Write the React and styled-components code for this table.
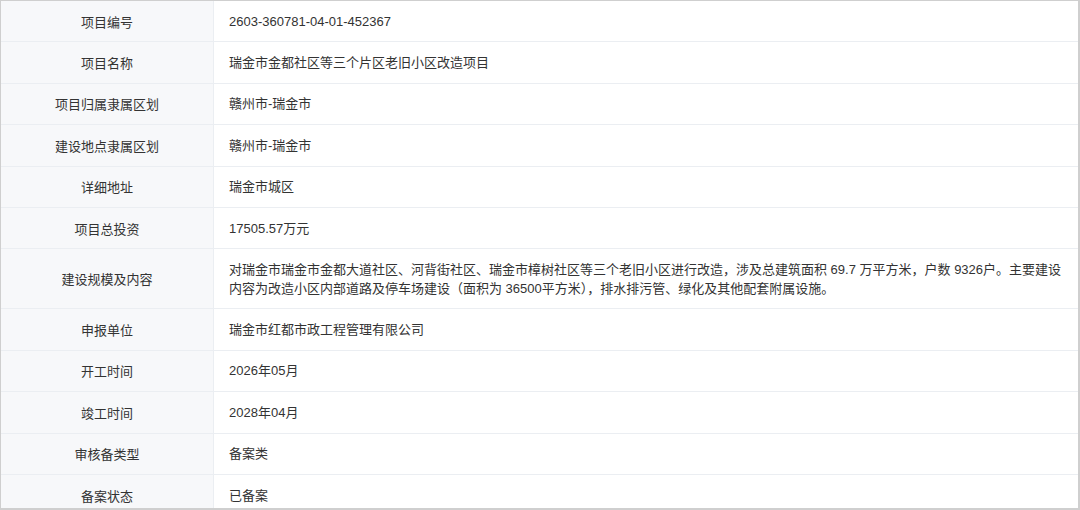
import React from "react";
import styled, { createGlobalStyle } from "styled-components";

const GlobalStyle = createGlobalStyle`
  html, body {
    margin: 0;
    padding: 0;
    background: #ffffff;
  }
  * {
    box-sizing: border-box;
  }
`;

const Frame = styled.div`
  width: 1080px;
  height: 510px;
  overflow: hidden;
  border-top: 1px solid #cfcfcf;
  border-left: 1px solid #cfcfcf;
  border-right: 2px solid #cfcfcf;
  border-bottom: 2px solid #cfcfcf;
  background: #ffffff;
  font-family: "Liberation Sans", "Noto Sans CJK SC", sans-serif;
  font-size: 13px;
  color: #333333;
`;

const Table = styled.div`
  display: flex;
  flex-direction: column;
`;

const Row = styled.div`
  display: grid;
  grid-template-columns: 213px 1fr;
  min-height: ${(props) => (props.$tall ? "60px" : "41.4px")};
  border-bottom: 1px solid #ebeef2;
`;

const Label = styled.div`
  display: flex;
  align-items: center;
  justify-content: center;
  background: #f7f8fa;
  border-right: 1px solid #ebeef2;
  padding: 0 10px;
  text-align: center;
`;

const Value = styled.div`
  display: flex;
  align-items: center;
  padding: 0 14px 0 15px;
  line-height: 19px;
`;

const rows = [
  ["项目编号", "2603-360781-04-01-452367"],
  ["项目名称", "瑞金市金都社区等三个片区老旧小区改造项目"],
  ["项目归属隶属区划", "赣州市-瑞金市"],
  ["建设地点隶属区划", "赣州市-瑞金市"],
  ["详细地址", "瑞金市城区"],
  ["项目总投资", "17505.57万元"],
  [
    "建设规模及内容",
    "对瑞金市瑞金市金都大道社区、河背街社区、瑞金市樟树社区等三个老旧小区进行改造，涉及总建筑面积 69.7 万平方米，户数 9326户。主要建设内容为改造小区内部道路及停车场建设（面积为 36500平方米），排水排污管、绿化及其他配套附属设施。",
    true,
  ],
  ["申报单位", "瑞金市红都市政工程管理有限公司"],
  ["开工时间", "2026年05月"],
  ["竣工时间", "2028年04月"],
  ["审核备类型", "备案类"],
  ["备案状态", "已备案"],
];

const App = () => {
  return (
    <>
      <GlobalStyle />
      <Frame>
        <Table>
          {rows.map(([label, value, tall]) => (
            <Row key={label} $tall={tall}>
              <Label>{label}</Label>
              <Value>{value}</Value>
            </Row>
          ))}
        </Table>
      </Frame>
    </>
  );
};

export default App;
